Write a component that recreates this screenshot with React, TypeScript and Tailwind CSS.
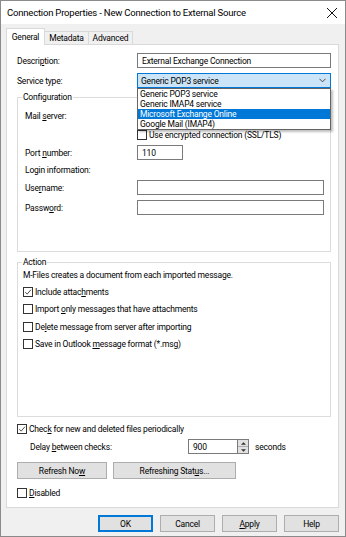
import React from 'react';

const Box = ({ checked }: { checked?: boolean }) => (
  <span className="w-[10px] h-[10px] border border-[#333] bg-white flex items-center justify-center shrink-0">
    {checked && (
      <svg viewBox="0 0 10 10" className="w-[10px] h-[10px]">
        <path d="M1.5 5.2 L4 7.6 L8.6 2.2" fill="none" stroke="#222" strokeWidth="1" />
      </svg>
    )}
  </span>
);

const Input = ({ w, value }: { w: string; value?: string }) => (
  <div className={`${w} h-[15px] border border-[#7a7a7a] bg-white flex items-center pl-[4px] shrink-0`}>
    {value}
  </div>
);

const Check = ({ checked, children }: { checked?: boolean; children: React.ReactNode }) => (
  <div className="flex items-center h-[12px]">
    <Box checked={checked} />
    <span className="ml-[2px]">{children}</span>
  </div>
);

const Btn = ({ w, children, primary }: { w: string; children: React.ReactNode; primary?: boolean }) => (
  <div
    className={`${w} h-[17px] flex items-center justify-center bg-[#e1e1e1] ${
      primary ? 'border-2 border-[#0078d7]' : 'border border-[#adadad]'
    }`}
  >
    {children}
  </div>
);

const Legend = ({ ml, children }: { ml: string; children: React.ReactNode }) => (
  <span className={`-mt-[7px] ${ml} h-[12px] leading-[12px] px-[1px] bg-white w-fit`}>{children}</span>
);

const services = ['Generic POP3 service', 'Generic IMAP4 service', 'Microsoft Exchange Online', 'Google Mail (IMAP4)'];

export default function App() {
  return (
    <div className="w-[346px] h-[537px] bg-[#f0f0f0] border border-[#8a8a8a] flex flex-col text-[8.5px] tracking-[-0.2px] leading-[12px] text-black font-['Roboto','Noto_Sans',sans-serif]">
      {/* title bar */}
      <div className="h-[23px] bg-white flex items-center justify-between pl-[6px] pr-[7px] shrink-0">
        <span className="text-[9.5px]">Connection Properties - New Connection to External Source</span>
        <svg viewBox="0 0 12 12" className="w-[12px] h-[12px]">
          <path d="M1 1 L11 11 M11 1 L1 11" stroke="#111" strokeWidth="1" />
        </svg>
      </div>

      {/* tabs */}
      <div className="mt-[4px] ml-[5px] h-[17px] flex items-end -mb-px relative z-10">
        <div className="w-[39px] h-[17px] bg-white border border-b-0 border-[#d9d9d9] flex items-center justify-center">
          General
        </div>
        <div className="w-[44px] h-[14px] bg-[#f0f0f0] border border-[#d9d9d9] border-l-0 flex items-center justify-center">
          Metadata
        </div>
        <div className="w-[44px] h-[14px] bg-[#f0f0f0] border border-[#d9d9d9] border-l-0 flex items-center justify-center">
          Advanced
        </div>
      </div>

      {/* panel */}
      <div className="ml-[5px] w-[333px] h-[464px] bg-white border border-[#d9d9d9] pl-[10px] pr-[7px] flex flex-col">
        <div className="mt-[8px] flex items-center">
          <span className="w-[120px]">
            Descri<u>p</u>tion:
          </span>
          <Input w="w-[194px]" value="External Exchange Connection" />
        </div>
        <div className="mt-[5px] flex items-center">
          <span className="w-[120px]">Service type:</span>
          <div className="relative">
            <div className="w-[194px] h-[15px] border border-[#0078d7] bg-[#cce4f7] flex items-center justify-between pl-[3px] pr-[4px]">
              <span>Generic POP3 service</span>
              <svg viewBox="0 0 8 5" className="w-[7px] h-[5px]">
                <path d="M0.5 0.5 L4 4 L7.5 0.5" fill="none" stroke="#333" strokeWidth="1" />
              </svg>
            </div>
            <div className="absolute top-[15px] left-0 w-[194px] bg-white border border-[#646464] shadow-[2px_2px_2px_rgba(0,0,0,0.25)] z-20 flex flex-col">
              {services.map((s, i) => (
                <div
                  key={s}
                  className={`h-[10px] leading-[10px] pl-[2px] ${i === 2 ? 'bg-[#0078d7] text-white' : ''}`}
                >
                  {s}
                </div>
              ))}
            </div>
          </div>
        </div>

        {/* configuration */}
        <div className="mt-[9px] h-[155px] border border-[#dcdcdc] flex flex-col pl-[7px]">
          <Legend ml="-ml-[3px]">Configuration</Legend>
          <div className="mt-[5px] flex items-center">
            <span className="w-[112px]">
              Mail <u>s</u>erver:
            </span>
            <Input w="w-[187px]" />
          </div>
          <div className="mt-[6px] ml-[112px]">
            <Check>Use encrypted connection (SSL/TLS)</Check>
          </div>
          <div className="mt-[4px] flex items-center">
            <span className="w-[112px]">
              Port <u>n</u>umber:
            </span>
            <Input w="w-[46px]" value="110" />
          </div>
          <div className="mt-[4px] h-[12px]">Login information:</div>
          <div className="mt-[4px] flex items-center">
            <span className="w-[112px]">
              Use<u>r</u>name:
            </span>
            <Input w="w-[187px]" />
          </div>
          <div className="mt-[5px] flex items-center">
            <span className="w-[112px]">
              Passw<u>o</u>rd:
            </span>
            <Input w="w-[187px]" />
          </div>
        </div>

        {/* action */}
        <div className="mt-[10px] h-[155px] border border-[#dcdcdc] flex flex-col pl-[5px]">
          <Legend ml="-ml-[1px]">Action</Legend>
          <div className="mt-[1px] h-[12px]">M-Files creates a document from each imported message.</div>
          <div className="mt-[5px]">
            <Check checked>
              Include attac<u>h</u>ments
            </Check>
          </div>
          <div className="mt-[5px]">
            <Check>
              Import <u>o</u>nly messages that have attachments
            </Check>
          </div>
          <div className="mt-[6px]">
            <Check>
              De<u>l</u>ete message from server after importing
            </Check>
          </div>
          <div className="mt-[5px]">
            <Check>
              Save in Outlook <u>m</u>essage format (*.msg)
            </Check>
          </div>
        </div>

        <div className="mt-[6px]">
          <Check checked>
            Chec<u>k</u> for new and deleted files periodically
          </Check>
        </div>
        <div className="mt-[4px] flex items-center pl-[13px]">
          <span className="w-[158px]">
            Delay <u>b</u>etween checks:
          </span>
          <Input w="w-[50px]" value="900" />
          <div className="w-[11px] h-[15px] border border-l-0 border-[#7a7a7a] bg-[#e1e1e1] flex flex-col">
            <div className="flex-1 flex items-center justify-center border-b border-[#adadad]">
              <svg viewBox="0 0 6 3" className="w-[5px] h-[3px]">
                <path d="M0 3 L3 0 L6 3 Z" fill="#333" />
              </svg>
            </div>
            <div className="flex-1 flex items-center justify-center">
              <svg viewBox="0 0 6 3" className="w-[5px] h-[3px]">
                <path d="M0 0 L3 3 L6 0 Z" fill="#333" />
              </svg>
            </div>
          </div>
          <span className="ml-[6px]">seconds</span>
        </div>
        <div className="mt-[8px] flex gap-[6px]">
          <Btn w="w-[90px]">
            Refresh No<u>w</u>
          </Btn>
          <Btn w="w-[123px]">
            Refreshing Stat<u>u</u>s...
          </Btn>
        </div>
        <div className="mt-[8px]">
          <Check>
            <u>D</u>isabled
          </Check>
        </div>
      </div>

      {/* dialog buttons */}
      <div className="mt-[7px] flex justify-end gap-[7px] pr-[6px]">
        <Btn w="w-[55px]" primary>
          OK
        </Btn>
        <Btn w="w-[55px]">Cancel</Btn>
        <Btn w="w-[55px]">
          <u>A</u>pply
        </Btn>
        <Btn w="w-[55px]">Help</Btn>
      </div>
    </div>
  );
}
